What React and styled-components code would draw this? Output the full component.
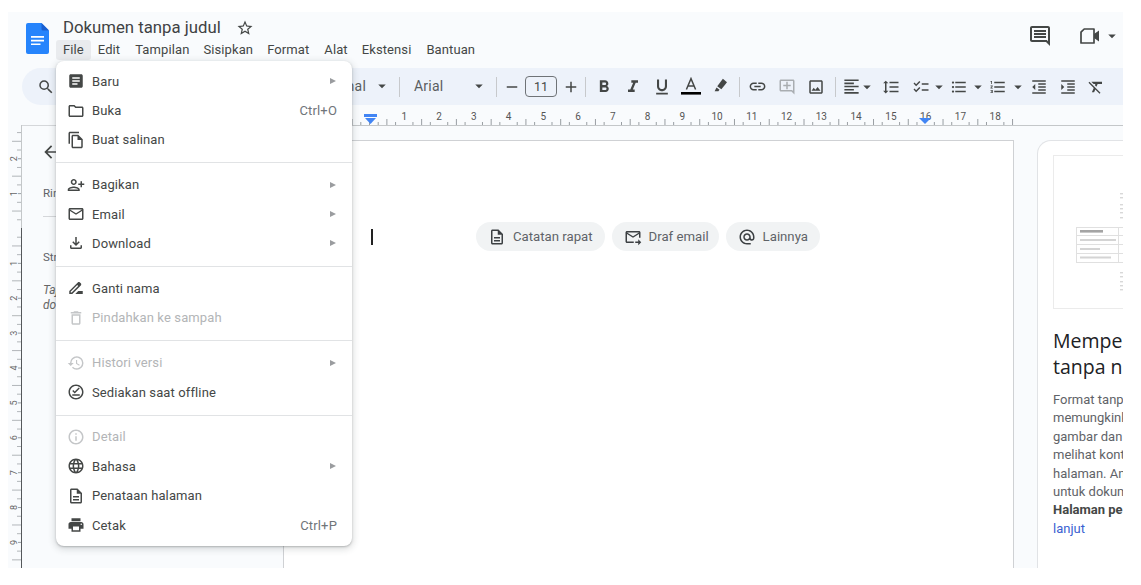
import React from 'react';
import styled, { createGlobalStyle } from 'styled-components';
import {
  MdStarBorder, MdOutlineComment, MdSearch, MdArrowDropDown, MdRemove, MdAdd,
  MdFormatBold, MdFormatItalic, MdFormatUnderlined, MdLink, MdOutlineAddComment,
  MdOutlineImage, MdFormatAlignLeft, MdFormatLineSpacing, MdChecklist, MdFormatListBulleted,
  MdFormatListNumbered, MdFormatIndentDecrease, MdFormatIndentIncrease, MdFormatClear, MdArticle,
  MdOutlineFolder, MdOutlineFileCopy, MdOutlinePersonAddAlt1, MdMailOutline, MdOutlineFileDownload,
  MdDriveFileRenameOutline, MdDeleteOutline, MdHistory, MdOutlineOfflinePin, MdInfoOutline, MdLanguage,
  MdOutlineDescription, MdPrint, MdOutlineForwardToInbox, MdAlternateEmail, MdArrowBack,
} from 'react-icons/md';

const Global = createGlobalStyle`
  html, body { margin: 0; padding: 0; background: #fff; height: 100%; overflow: hidden; }
  body { font-family: Roboto, "Liberation Sans", sans-serif; color: #444746; }
`;

const Page = styled.div`
  width: 1141px; height: 585px; padding: 12px 18px 17px 8px; box-sizing: border-box; background: #fff;
`;
const Window = styled.div`
  position: relative; width: 1115px; height: 556px; background: #f9fbfd; overflow: hidden;
  display: flex; flex-direction: column;
`;

const Header = styled.header`
  height: 56px; flex: none; display: flex; align-items: flex-start; padding: 0 0 0 18px; box-sizing: border-box;
`;
const Logo = styled.svg`width: 23px; height: 31px; margin-top: 11px; flex: none;`;
const TitleColumn = styled.div`margin-left: 7px; display: flex; flex-direction: column;`;
const TitleRow = styled.div`display: flex; align-items: center; height: 28px; padding-left: 7px; margin-top: 1px;`;
const DocTitle = styled.div`
  font-family: Roboto, sans-serif; font-size: 16.75px; color: #3f4244; line-height: 28px; width: 167px; white-space: nowrap; margin-top: -1px;
`;
const Star = styled.span`display: flex; font-size: 18px; color: #444746; margin-left: 6px; margin-top: 1px;`;
const MenuBar = styled.nav`display: flex; height: 20px; margin-top: -1px;`;
const MenuTab = styled.div`
  padding: 0 7px; font-size: 13px; letter-spacing: .1px; line-height: 20px; color: #444746; border-radius: 3px;
  margin-right: ${p => p.$gap || 0}px;
  background: ${p => (p.$active ? '#e9ebee' : 'transparent')};
`;
const HeaderActions = styled.div`
  margin-left: auto; display: flex; align-items: center; height: 48px; color: #444746; padding-right: 2px;
`;
const ActionIcon = styled.span`display: flex; font-size: ${p => p.$size || 24}px; margin-left: ${p => p.$ml || 0}px;`;

const Toolbar = styled.div`
  height: 37px; flex: none; margin-left: 14px; padding-left: 12px; background: #edf2fa;
  border-radius: 19px 0 0 19px; display: flex; align-items: center; color: #444746;
`;
const ToolBtn = styled.span`
  width: ${p => p.$w}px; height: 24px; flex: none; display: flex; align-items: center; justify-content: center;
  font-size: ${p => p.$size || 18}px; color: ${p => (p.$off ? '#a9adb1' : '#444746')};
  & > svg { flex: none; }
`;
const Sep = styled.span`
  width: 1px; height: 20px; background: #c7c9cc; flex: none;
  margin: 0 ${p => p.$r ?? 8}px 0 ${p => p.$l ?? 8}px;
`;
const Select = styled.span`
  width: ${p => p.$w}px; flex: none; display: flex; align-items: center; justify-content: space-between; box-sizing: border-box;
  padding-left: 6px; letter-spacing: .2px; color: #5a5e61; font-size: 14px; line-height: 18px; margin-top: -1px;
`;
const SelectRight = styled(Select)`justify-content: flex-end;`;
const SelectCaret = styled.span`display: flex; font-size: 18px; color: #444746; margin-left: ${p => p.$ml || 0}px;`;
const SizeBox = styled.span`
  width: 32px; height: 21px; box-sizing: border-box; border: 1px solid #6f7377; border-radius: 4px; margin: 0 7px; flex: none;
  display: flex; align-items: center; justify-content: center; font-size: 12.5px; color: #444746;
`;

const RulerRow = styled.svg`display: block; width: 1115px; height: 21px; flex: none;`;

const Workspace = styled.div`flex: 1; min-height: 0; display: flex; align-items: stretch;`;
const VRuler = styled.svg`width: 14px; height: 443px; flex: none; margin-top: -1px; display: block;`;
const SidePanel = styled.aside`
  width: 261px; flex: none; box-sizing: border-box; padding: 16px 0 0 21px; border-top: 1px solid #d5d7da; margin-top: -1px;
  font-size: 11.5px; color: #5f6368;
`;
const BackArrow = styled.span`display: flex; font-size: 20px; color: #444746; margin-left: -2px;`;
const SideLabel = styled.div`margin-top: ${p => p.$mt}px; line-height: 14px; color: #5f6368;`;
const SideRule = styled.div`height: 1px; background: #d5d7da; width: 210px; margin-top: 16px;`;
const SideHint = styled.div`margin-top: 19px; font-style: italic; line-height: 15px; width: 200px; font-size: 12px; color: #666;`;

const DocPage = styled.main`
  width: 731px; flex: none; box-sizing: border-box; margin-top: 14px; background: #fff;
  border: 1px solid #cfd1d4; border-bottom: 0; padding: 81px 0 0 87px; display: flex; align-items: flex-start;
`;
const Cursor = styled.span`width: 1.6px; height: 16px; background: #222; margin-top: 7px; flex: none;`;
const Chips = styled.div`display: flex; gap: 7px; margin-left: 103.4px;`;
const Chip = styled.div`
  height: 29px; box-sizing: border-box; padding: 0 ${p => p.$pr}px 0 12px; border-radius: 15px; background: #f1f3f4;
  display: flex; align-items: center; gap: 7px; font-size: 13.2px; color: #5f6368; white-space: nowrap;
`;
const ChipIcon = styled.span`display: flex; font-size: 18px; color: #3c4043;`;

const InfoCard = styled.section`
  margin: 14px 0 0 23px; width: 200px; flex: none; box-sizing: border-box; background: #fff;
  border: 1px solid #e1e3e6; border-bottom: 0; border-radius: 14px 0 0 0; padding: 14px 0 0 15px; overflow: hidden;
`;
const Thumb = styled.svg`display: block; width: 183px; height: 154px;`;
const CardTitle = styled.h3`
  margin: 19px 0 0; font-family: "Open Sans", Roboto, sans-serif; font-weight: 400; font-size: 19.5px; line-height: 26px; color: #202124; white-space: nowrap;
`;
const CardText = styled.p`margin: 11px 0 0; font-size: 13px; line-height: 18.4px; color: #5f6368; white-space: nowrap;`;
const CardLine = styled.span`
  display: block; font-weight: ${p => (p.$strong ? 700 : 400)}; color: ${p => (p.$link ? '#3b5fd1' : p.$strong ? '#444746' : '#5f6368')};
`;

const FileMenu = styled.div`
  position: absolute; left: 48px; top: 49px; width: 296px; height: 485px; box-sizing: border-box; background: #fff;
  border-radius: 8px; padding: 5.5px 0 7px; box-shadow: 0 2px 6px 2px rgba(60,64,67,.15), 0 1px 2px rgba(60,64,67,.3);
`;
const MenuRow = styled.div`
  height: 29.35px; display: flex; align-items: center; padding: 0 15px 0 11px; font-size: 13px; letter-spacing: .12px;
  color: ${p => (p.$off ? '#b3b5b7' : '#444746')};
`;
const RowIcon = styled.span`
  width: 18px; flex: none; display: flex; font-size: 18px; margin-right: 7px; color: ${p => (p.$off ? '#c4c6c8' : '#444746')};
`;
const RowKey = styled.span`margin-left: auto; color: #70757a; font-size: 13px; letter-spacing: .15px;`;
const RowArrow = styled.span`
  margin-left: auto; margin-right: 1px; width: 0; height: 0; border-left: 6px solid #9a9c9f;
  border-top: 3.5px solid transparent; border-bottom: 3.5px solid transparent;
`;
const MenuRule = styled.div`height: 1px; background: #e1e3e5; margin: 7.8px 0 6.8px;`;

const Marker = () => (
  <svg viewBox="0 2.5 24 24" width="18" height="18" fill="#444746">
    <path d="M14.5 3.5 20 8l-7.5 9.5-5.5-4z" />
    <path d="m6 15 4 3-1.5 2H3.5z" />
  </svg>
);

const TextColor = () => (
  <svg viewBox="0 0 20 20" width="20" height="20">
    <path d="M5.4 12.5 10 1.6l4.6 10.9M7 9h6" fill="none" stroke="#444746" strokeWidth="1.5" />
    <rect x="0" y="15" width="20" height="2.6" fill="#000" />
  </svg>
);

const VideoCam = () => (
  <svg viewBox="0 0 20 16" width="20" height="16">
    <path d="M4.2 1H14v14H1V4.2z" fill="none" stroke="#444746" strokeWidth="1.7" strokeLinejoin="round" />
    <path d="m14 6 5-3.4v10.8L14 10z" fill="#444746" />
  </svg>
);

const menu = [
  [
    { icon: MdArticle, label: 'Baru', arrow: true },
    { icon: MdOutlineFolder, label: 'Buka', key_: 'Ctrl+O' },
    { icon: MdOutlineFileCopy, label: 'Buat salinan' },
  ],
  [
    { icon: MdOutlinePersonAddAlt1, label: 'Bagikan', arrow: true },
    { icon: MdMailOutline, label: 'Email', arrow: true },
    { icon: MdOutlineFileDownload, label: 'Download', arrow: true },
  ],
  [
    { icon: MdDriveFileRenameOutline, label: 'Ganti nama' },
    { icon: MdDeleteOutline, label: 'Pindahkan ke sampah', off: true },
  ],
  [
    { icon: MdHistory, label: 'Histori versi', arrow: true, off: true },
    { icon: MdOutlineOfflinePin, label: 'Sediakan saat offline' },
  ],
  [
    { icon: MdInfoOutline, label: 'Detail', off: true },
    { icon: MdLanguage, label: 'Bahasa', arrow: true },
    { icon: MdOutlineDescription, label: 'Penataan halaman' },
    { icon: MdPrint, label: 'Cetak', key_: 'Ctrl+P' },
  ],
];

const tabs = [
  ['File', 0, true], ['Edit', 1], ['Tampilan', 0], ['Sisipkan', 0], ['Format', 1], ['Alat', 0], ['Ekstensi', 1], ['Bantuan', 0],
];

const HRulerDrawing = () => {
  const o = 361.5, step = 8.69; // x of zero inside the window
  const ticks = [];
  for (let i = -10; i <= 74; i++) {
    const x = o + step * i;
    if (i % 4 === 0 && i !== 0) {
      const n = i / 4;
      if (n > 0) ticks.push(<text key={`n${i}`} x={x} y={15} fontSize="10" fill="#555" textAnchor="middle" fontFamily="Roboto, sans-serif">{n}</text>);
    } else {
      const h = Math.abs(i % 4) === 2 ? 6 : 3;
      ticks.push(<line key={i} x1={x} x2={x} y1={20 - h} y2={20} stroke="#80868b" strokeWidth=".8" />);
    }
  }
  return (
    <RulerRow viewBox="0 0 1115 21">
      <line x1="14" x2="1115" y1="20.5" y2="20.5" stroke="#c4c7c9" />
      {ticks}
      <rect x="356" y="9" width="13" height="3" fill="#4285f4" />
      <path d="M357 13h11l-5.5 6z" fill="#4285f4" />
      <path d="M911 13h12l-6 6z" fill="#4285f4" />
    </RulerRow>
  );
};

const VRulerDrawing = () => {
  const zero = 103.5, step = 8.72;
  const marks = [];
  for (let i = -11; i <= 38; i++) {
    const y = zero + step * i;
    if (i === 0) continue;
    if (i % 4 === 0) {
      const n = Math.abs(i / 4);
      marks.push(
        <g key={i}>
          <text x={0} y={0} fontSize="9" fill="#666" textAnchor="middle" fontFamily="Roboto, sans-serif"
            transform={`translate(5.5 ${y}) rotate(-90) translate(0 3)`}>{n}</text>
          <line x1="10" x2="13" y1={y} y2={y} stroke="#80868b" strokeWidth=".8" />
        </g>
      );
    } else {
      const long = Math.abs(i % 4) === 2;
      marks.push(<line key={i} x1={long ? 4 : 9} x2={13} y1={y} y2={y} stroke="#a0a4a8" strokeWidth=".8" />);
    }
  }
  return (
    <VRuler viewBox="0 0 14 443">
      {marks}
      <line x1="13.5" x2="13.5" y1="0" y2="103" stroke="#c4c7c9" />
      <line x1="13.5" x2="13.5" y1="103" y2="443" stroke="#55585b" />
    </VRuler>
  );
};

const ThumbDrawing = () => (
  <Thumb viewBox="0 0 183 154">
    <rect x=".5" y=".5" width="182" height="153" fill="#fff" stroke="#ebebeb" />
    {[38, 42, 49, 53, 57, 62, 117, 121, 126, 130, 134].map(y => (
      <rect key={y} x="67" y={y} width="30" height="1.4" fill="#d8d8d8" />
    ))}
    <g stroke="#e0e0e0" fill="none">
      <rect x="23.5" y="72.5" width="90" height="35" />
      <line x1="65.5" x2="65.5" y1="72" y2="108" />
      <line x1="23" x2="114" y1="80.5" y2="80.5" />
      <line x1="23" x2="114" y1="89.5" y2="89.5" />
      <line x1="23" x2="114" y1="98.5" y2="98.5" />
    </g>
    <rect x="27" y="75" width="23" height="2.6" fill="#a4a4a4" />
    <rect x="27" y="84" width="36" height="2" fill="#d4d4d4" />
    <rect x="27" y="93" width="20" height="2" fill="#d4d4d4" />
    <rect x="27" y="101.5" width="31" height="2" fill="#d4d4d4" />
  </Thumb>
);

export default function App() {
  return (
    <Page>
      <Global />
      <Window>
        <Header>
          <Logo viewBox="0 0 23 31">
            <path d="M2 0h13.5L23 7.5V29a2 2 0 0 1-2 2H2a2 2 0 0 1-2-2V2a2 2 0 0 1 2-2z" fill="#2684fc" />
            <path d="M15.5 0 23 7.5h-6a1.5 1.5 0 0 1-1.5-1.5z" fill="#1a5fd0" />
            <path d="M5 13h13v1.7H5zM5 16.7h13v1.7H5zM5 20.4h9.5v1.7H5z" fill="#fff" />
          </Logo>
          <TitleColumn>
            <TitleRow>
              <DocTitle>Dokumen tanpa judul</DocTitle>
              <Star><MdStarBorder /></Star>
            </TitleRow>
            <MenuBar>
              {tabs.map(([t, g, a]) => <MenuTab key={t} $gap={g} $active={a}>{t}</MenuTab>)}
            </MenuBar>
          </TitleColumn>
          <HeaderActions>
            <ActionIcon><MdOutlineComment /></ActionIcon>
            <ActionIcon $ml={28} $size={16}><VideoCam /></ActionIcon>
            <ActionIcon $size={18} $ml={3}><MdArrowDropDown /></ActionIcon>
          </HeaderActions>
        </Header>

        <Toolbar>
          <ToolBtn $w={24}><MdSearch /></ToolBtn>
          <SelectRight $w={333}>Teks normal<SelectCaret $ml={7}><MdArrowDropDown /></SelectCaret></SelectRight>
          <Sep />
          <Select $w={80}>Arial<SelectCaret><MdArrowDropDown /></SelectCaret></Select>
          <Sep />
          <ToolBtn $w={13}><MdRemove /></ToolBtn>
          <SizeBox>11</SizeBox>
          <ToolBtn $w={13}><MdAdd /></ToolBtn>
          <Sep $r={3} />
          <ToolBtn $w={29} $size={20}><MdFormatBold /></ToolBtn>
          <ToolBtn $w={29} $size={20}><MdFormatItalic /></ToolBtn>
          <ToolBtn $w={29} $size={20}><MdFormatUnderlined /></ToolBtn>
          <ToolBtn $w={29}><TextColor /></ToolBtn>
          <ToolBtn $w={32}><Marker /></ToolBtn>
          <Sep $l={2} $r={3} />
          <ToolBtn $w={29} $size={19}><MdLink /></ToolBtn>
          <ToolBtn $w={29} $off><MdOutlineAddComment /></ToolBtn>
          <ToolBtn $w={30}><MdOutlineImage /></ToolBtn>
          <Sep $l={4} $r={4} />
          <ToolBtn $w={22} $size={19}><MdFormatAlignLeft /></ToolBtn>
          <ToolBtn $w={10} $size={18}><MdArrowDropDown /></ToolBtn>
          <ToolBtn $w={38}><MdFormatLineSpacing /></ToolBtn>
          <ToolBtn $w={22}><MdChecklist /></ToolBtn>
          <ToolBtn $w={14}><MdArrowDropDown /></ToolBtn>
          <ToolBtn $w={26}><MdFormatListBulleted /></ToolBtn>
          <ToolBtn $w={12}><MdArrowDropDown /></ToolBtn>
          <ToolBtn $w={28}><MdFormatListNumbered /></ToolBtn>
          <ToolBtn $w={12}><MdArrowDropDown /></ToolBtn>
          <ToolBtn $w={30}><MdFormatIndentDecrease /></ToolBtn>
          <ToolBtn $w={28}><MdFormatIndentIncrease /></ToolBtn>
          <ToolBtn $w={28}><MdFormatClear /></ToolBtn>
        </Toolbar>

        <HRulerDrawing />

        <Workspace>
          <VRulerDrawing />
          <SidePanel>
            <BackArrow><MdArrowBack /></BackArrow>
            <SideLabel $mt={24}>Ringkasan</SideLabel>
            <SideRule />
            <SideLabel $mt={33}>Struktur</SideLabel>
            <SideHint>Tajuk yang Anda tambahkan ke dokumen akan muncul di sini.</SideHint>
          </SidePanel>
          <DocPage>
            <Cursor />
            <Chips>
              <Chip $pr={12}><ChipIcon><MdOutlineDescription /></ChipIcon>Catatan rapat</Chip>
              <Chip $pr={10}><ChipIcon><MdOutlineForwardToInbox /></ChipIcon>Draf email</Chip>
              <Chip $pr={12}><ChipIcon><MdAlternateEmail /></ChipIcon>Lainnya</Chip>
            </Chips>
          </DocPage>
          <InfoCard>
            <ThumbDrawing />
            <CardTitle>Mempe<br />tanpa n</CardTitle>
            <CardText>
              <CardLine>Format tanp</CardLine>
              <CardLine>memungkink</CardLine>
              <CardLine>gambar dan</CardLine>
              <CardLine>melihat kont</CardLine>
              <CardLine>halaman. An</CardLine>
              <CardLine>untuk dokum</CardLine>
              <CardLine $strong>Halaman pe</CardLine>
              <CardLine $link>lanjut</CardLine>
            </CardText>
          </InfoCard>
        </Workspace>

        <FileMenu>
          {menu.map((group, gi) => (
            <React.Fragment key={gi}>
              {gi > 0 && <MenuRule />}
              {group.map(item => {
                const Icon = item.icon;
                return (
                  <MenuRow key={item.label} $off={item.off}>
                    <RowIcon $off={item.off}><Icon /></RowIcon>
                    {item.label}
                    {item.arrow && <RowArrow />}
                    {item.key_ && <RowKey>{item.key_}</RowKey>}
                  </MenuRow>
                );
              })}
            </React.Fragment>
          ))}
        </FileMenu>
      </Window>
    </Page>
  );
}
